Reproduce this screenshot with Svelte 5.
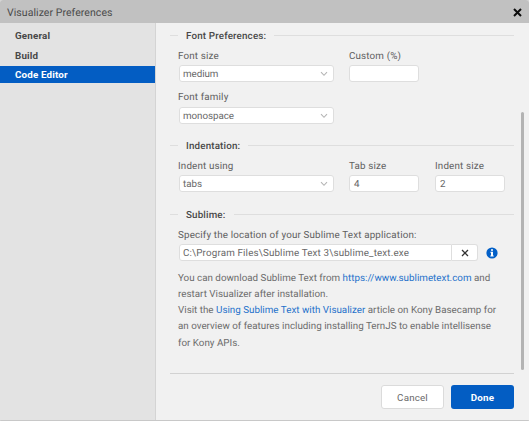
<script>
  const tabs = ['General', 'Build', 'Code Editor'];
  let active = $state('Code Editor');
</script>

{#snippet heading(text)}
  <div class="heading"><i class="lead"></i><h2>{text}</h2><i class="rule"></i></div>
{/snippet}

{#snippet select(label, value)}
  <div class="field wide">
    <div class="label">{label}</div>
    <div class="control select">
      <span>{value}</span>
      <svg width="8" height="6" viewBox="0 0 8 6"><path d="M1 1.2 4 4.3 7 1.2" fill="none" stroke="#b5b5b5" stroke-width="1.1" /></svg>
    </div>
  </div>
{/snippet}

{#snippet box(label, value)}
  <div class="field small">
    <div class="label">{label}</div>
    <div class="control">{value}</div>
  </div>
{/snippet}

<div class="dialog">
  <header>
    <span>Visualizer Preferences</span>
    <svg width="9" height="9" viewBox="0 0 9 9"><path d="M1 1 8 8M8 1 1 8" stroke="#0c0c0c" stroke-width="2" /></svg>
  </header>
  <div class="body">
    <nav>
      {#each tabs as tab}
        <button class:active={tab === active} onclick={() => (active = tab)}>{tab}</button>
      {/each}
    </nav>
    <main>
      <div class="content">
        {@render heading('Font Preferences:')}
        <div class="row">
          {@render select('Font size', 'medium')}
          {@render box('Custom (%)', '')}
        </div>
        <div class="row second">
          {@render select('Font family', 'monospace')}
        </div>
        {@render heading('Indentation:')}
        <div class="row">
          {@render select('Indent using', 'tabs')}
          {@render box('Tab size', '4')}
          {@render box('Indent size', '2')}
        </div>
        {@render heading('Sublime:')}
        <div class="row">
          <div class="field">
            <div class="label path-label">Specify the location of your Sublime Text application:</div>
            <div class="path">
              <div class="control file">C:\Program Files\Sublime Text 3\sublime_text.exe</div>
              <div class="clear">
                <svg width="8" height="8" viewBox="0 0 8 8"><path d="M1 1 7 7M7 1 1 7" stroke="#333" stroke-width="1.3" /></svg>
              </div>
              <svg class="info" width="12" height="12" viewBox="0 0 12 12"><circle cx="6" cy="6" r="5.6" fill="#0360c8" /><path d="M5 2.2h2v1.6H5zM4.4 4.8H7v3.8h.7v1H4.3v-1H5V5.8h-.6z" fill="#fff" /></svg>
            </div>
          </div>
        </div>
        <div class="notes">
          <div>You can download Sublime Text from <span class="link">https://www.sublimetext.com</span> and</div>
          <div>restart Visualizer after installation.</div>
          <div>Visit the <span class="link">Using Sublime Text with Visualizer</span> article on Kony Basecamp for</div>
          <div>an overview of features including installing TernJS to enable intellisense</div>
          <div>for Kony APIs.</div>
        </div>
      </div>
      <footer>
        <button class="cancel">Cancel</button>
        <button class="done">Done</button>
      </footer>
      <div class="scroll"></div>
    </main>
  </div>
</div>

<style>
  :global(body) { background: #d5d5d5; }
  .dialog {
    box-sizing: border-box;
    width: 529px;
    height: 421px;
    display: flex;
    flex-direction: column;
    overflow: hidden;
    border-bottom: 1px solid #c8c8c8;
    border-radius: 3px 3px 1px 1px;
    background: #f1f1f1;
    color: #606060;
    font: 9.8px/17px Roboto, "Liberation Sans", sans-serif;
    letter-spacing: 0.16px;
    text-rendering: geometricPrecision;
    white-space: nowrap;
  }
  svg { display: block; flex: none; }
  header {
    flex: none;
    height: 23px;
    display: flex;
    align-items: center;
    justify-content: space-between;
    box-sizing: border-box;
    padding: 1px 7px 0 7px;
    background: #c1c1c1;
    color: #4a4a4a;
    font-size: 10.5px;
    letter-spacing: 0.06px;
  }
  .body { flex: 1; display: flex; min-height: 0; }
  nav {
    box-sizing: border-box;
    width: 156px;
    flex: none;
    padding-top: 4px;
    background: #e3e3e3;
    border-right: 1px solid #d4d4d4;
  }
  button { font: inherit; letter-spacing: inherit; border: 0; }
  nav button {
    display: block;
    width: 100%;
    height: 17px;
    margin: 0 0 2.5px;
    padding: 0 0 0 15px;
    text-align: left;
    background: none;
    color: #484848;
    font-weight: 700;
    line-height: 18px;
  }
  nav button.active { background: #035dc3; color: #fff; }
  main { position: relative; flex: 1; min-width: 0; padding: 4px 15px 0 14px; }
  .content { height: 346px; border-bottom: 1px solid #d2d2d2; }
  .heading { display: flex; align-items: center; height: 17px; }
  .heading i { height: 1px; background: #dedede; }
  .lead { width: 8px; margin-right: 8px; }
  .rule { flex: 1; margin-left: 8px; }
  h2 { margin: 0; padding-top: 2px; font-size: inherit; font-weight: 500; line-height: 17px; color: #484848; }
  .row { display: flex; gap: 16px; padding: 4px 0 14px 8px; }
  .row:has(+ .second) { padding-bottom: 4px; }
  .second { padding-bottom: 13px; }
  .second .label { line-height: 16px; }
  .wide { width: 155px; }
  .wide .control { width: 155px; margin-left: 1px; }
  .small { width: 70px; }
  .label { height: 15px; margin-bottom: 2px; }
  .control {
    box-sizing: border-box;
    height: 17px;
    padding: 0 4px;
    line-height: 17px;
    background: #fff;
    border: 1px solid #dedede;
    border-radius: 3px;
    color: #686868;
  }
  .select { display: flex; align-items: center; justify-content: space-between; padding: 1px 5px 0 3px; letter-spacing: -0.05px; }
  .path-label { line-height: 18px; }
  .path { display: flex; align-items: center; margin-left: 1px; }
  .file { width: 273px; padding-left: 3px; border-radius: 3px 0 0 3px; }
  .clear {
    box-sizing: border-box;
    width: 26px;
    height: 17px;
    display: grid;
    place-items: center;
    background: #fff;
    border: 1px solid #dedede;
    border-left: 0;
    border-radius: 0 3px 3px 0;
  }
  .info { margin-left: 8px; }
  .notes { margin-top: -4.5px; padding-left: 8px; line-height: 16.3px; letter-spacing: 0.01px; color: #6c6c6c; }
  .link { color: #2672cb; }
  footer { display: flex; justify-content: flex-end; gap: 7px; padding-top: 11px; }
  footer button { box-sizing: border-box; width: 63px; height: 24px; padding: 0; border-radius: 3px; }
  .cancel { background: #fff; border: 1px solid #dbdbdb; color: #6a6a6a; }
  .done { background: #035dc3; color: #fff; font-weight: 700; }
  .scroll { position: absolute; left: 365px; top: 89px; width: 3px; height: 258px; border-radius: 2px; background: #b3b3b3; }
</style>
